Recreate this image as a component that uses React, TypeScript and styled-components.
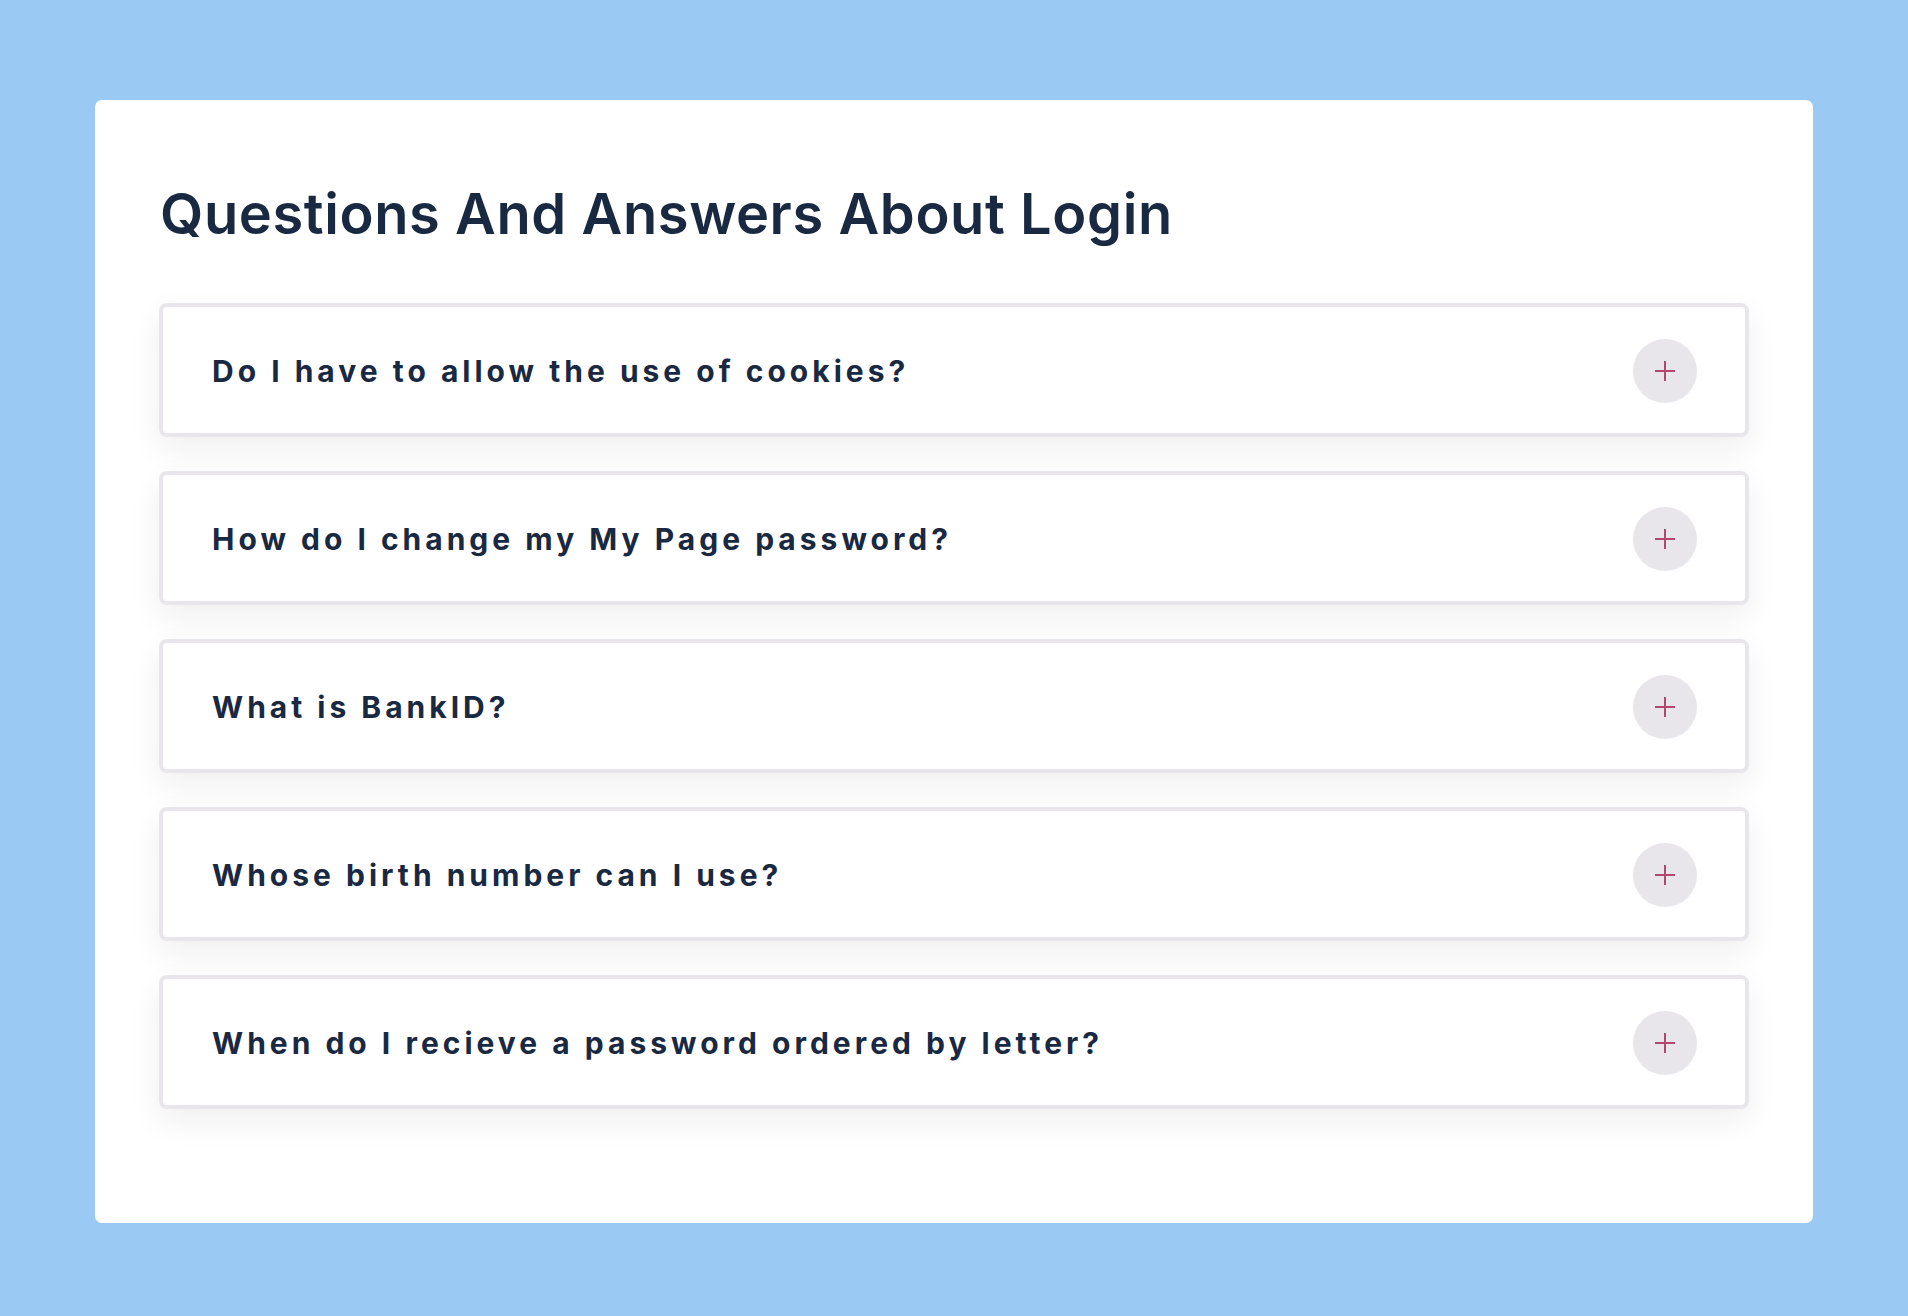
import React, { useState } from 'react';
import styled, { createGlobalStyle } from 'styled-components';

const GlobalStyle = createGlobalStyle`
  html, body {
    margin: 0;
    padding: 0;
    background-color: #9ac9f4;
  }
  * {
    box-sizing: border-box;
  }
`
const Page = styled.div`
  min-height: 1316px;
  padding: 100px 95px 93px 95px;
  font-family: Inter, 'Liberation Sans', sans-serif;
`
const Card = styled.section`
  background-color: #ffffff;
  border-radius: 7px;
  padding: 80px 64px 114px 64px;
`
const Title = styled.h1`
  margin: 0 0 55px 1px;
  font-size: 56px;
  line-height: 68px;
  font-weight: 600;
  letter-spacing: 0.6px;
  color: #1a2942;
`
const List = styled.div`
  display: flex;
  flex-direction: column;
  gap: 34px;
`
const Item = styled.div`
  background-color: #ffffff;
  border: 4px solid #e8e6ea;
  border-radius: 8px;
  box-shadow: 0 12px 32px rgba(30, 30, 50, 0.07);
`
const Header = styled.button`
  display: flex;
  align-items: center;
  justify-content: space-between;
  width: 100%;
  height: 126px;
  padding: 2px 48px 0 49px;
  border: none;
  background: none;
  cursor: pointer;
  text-align: left;
`
const Question = styled.span`
  font-family: Inter, 'Liberation Sans', sans-serif;
  font-size: 30px;
  font-weight: 700;
  letter-spacing: 4px;
  color: #1a2942;
`
const Toggle = styled.span<{ open: boolean }>`
  display: flex;
  align-items: center;
  justify-content: center;
  width: 64px;
  height: 64px;
  border-radius: 50%;
  background-color: #e8e6eb;
  transform: rotate(${(props) => (props.open ? '45deg' : '0deg')});
  transition: transform 0.2s;
`
const Answer = styled.p`
  margin: 0;
  padding: 0 49px 36px;
  font-size: 20px;
  line-height: 1.6;
  color: #4a5568;
`

type QA = {
  q: string;
  a: string;
}

const items: QA[] = [
  { q: 'Do I have to allow the use of cookies?', a: 'Cookies are required to keep you signed in during your session.' },
  { q: 'How do I change my My Page password?', a: 'Go to My Page, open settings and choose change password.' },
  { q: 'What is BankID?', a: 'BankID is an electronic identification used to log in securely.' },
  { q: 'Whose birth number can I use?', a: 'You can only use your own birth number to log in.' },
  { q: 'When do I recieve a password ordered by letter?', a: 'The letter usually arrives within 3-5 working days.' },
]

const PlusIcon = () => (
  <svg width="20" height="20" viewBox="0 0 20 20">
    <path d="M10 0v20M0 10h20" stroke="#b3466b" strokeWidth="2" />
  </svg>
)

export default function App() {
  const [opened, setOpened] = useState<number | null>(null);

  return (
    <>
      <GlobalStyle />
      <Page>
        <Card>
          <Title>Questions And Answers About Login</Title>
          <List>
            {
              items.map((item, index) => {
                const open = opened === index;
                return (
                  <Item key={`qa-${index}`}>
                    <Header onClick={() => setOpened(open ? null : index)}>
                      <Question>{item.q}</Question>
                      <Toggle open={open}>
                        <PlusIcon />
                      </Toggle>
                    </Header>
                    {open && <Answer>{item.a}</Answer>}
                  </Item>
                )
              })
            }
          </List>
        </Card>
      </Page>
    </>
  )
}
